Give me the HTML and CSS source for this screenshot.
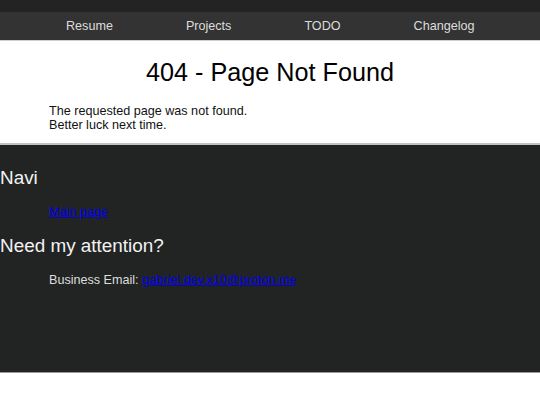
FILE: index.html
```html
<!DOCTYPE html>
<html lang="en">

<head>
  <meta charset="UTF-8">
  <meta name="viewport" content="width=device-width, initial-scale=1.0">
  <title>404 - Page Not Found</title>
  <link rel="stylesheet" href="styles.css">
</head>

<body>
  <header>
    <div class="topbar"></div>
    <nav class="nav">
      <a href="#" class="nav-link">Resume</a>
      <a href="#" class="nav-link">Projects</a>
      <a href="#" class="nav-link">TODO</a>
      <a href="#" class="nav-link">Changelog</a>
    </nav>
  </header>

  <main class="content">
    <h1>404 - Page Not Found</h1>
    <p>The requested page was not found.<br>Better luck next time.</p>
  </main>

  <footer class="footer">
    <h2>Navi</h2>
    <ul class="footer-links">
      <li><a href="#">Main page</a></li>
    </ul>
    <h2>Need my attention?</h2>
    <p class="contact">Business Email: <a href="#">gabriel.dev.x10@proton.me</a></p>
  </footer>
</body>

</html>
```

FILE: styles.css
```css
* {
  box-sizing: border-box;
}

body {
  margin: 0;
  font-family: "Liberation Sans", Arial, sans-serif;
  font-size: 12.6px;
  color: #111;
  background-color: #fff;
}

.topbar {
  height: 12px;
  background-color: #232323;
}

.nav {
  display: flex;
  align-items: center;
  gap: 73px;
  height: 29px;
  padding-left: 66px;
  background-color: #333;
  border-bottom: 1px solid #cfcfcf;
}

.nav-link {
  color: #ddd;
  text-decoration: none;
}

.content {
  padding: 17px 49px 11px;
}

.content h1 {
  margin: 0 0 17px;
  font-size: 25.2px;
  font-weight: normal;
  text-align: center;
  color: #000;
}

.content p {
  margin: 0;
}

.footer {
  height: 230px;
  padding-top: 22px;
  background-color: #222423;
  border-top: 2px solid #c2c2c2;
  border-bottom: 1px solid #9a9a9a;
  color: #ddd;
}

.footer h2 {
  margin: 0;
  font-size: 18.9px;
  font-weight: normal;
  color: #f2f2f2;
}

.footer-links {
  list-style: none;
  margin: 16px 0 16px;
  padding-left: 49px;
}

.footer a {
  color: #0000ee;
}

.contact {
  margin: 16px 0 0;
  padding-left: 49px;
}
```
